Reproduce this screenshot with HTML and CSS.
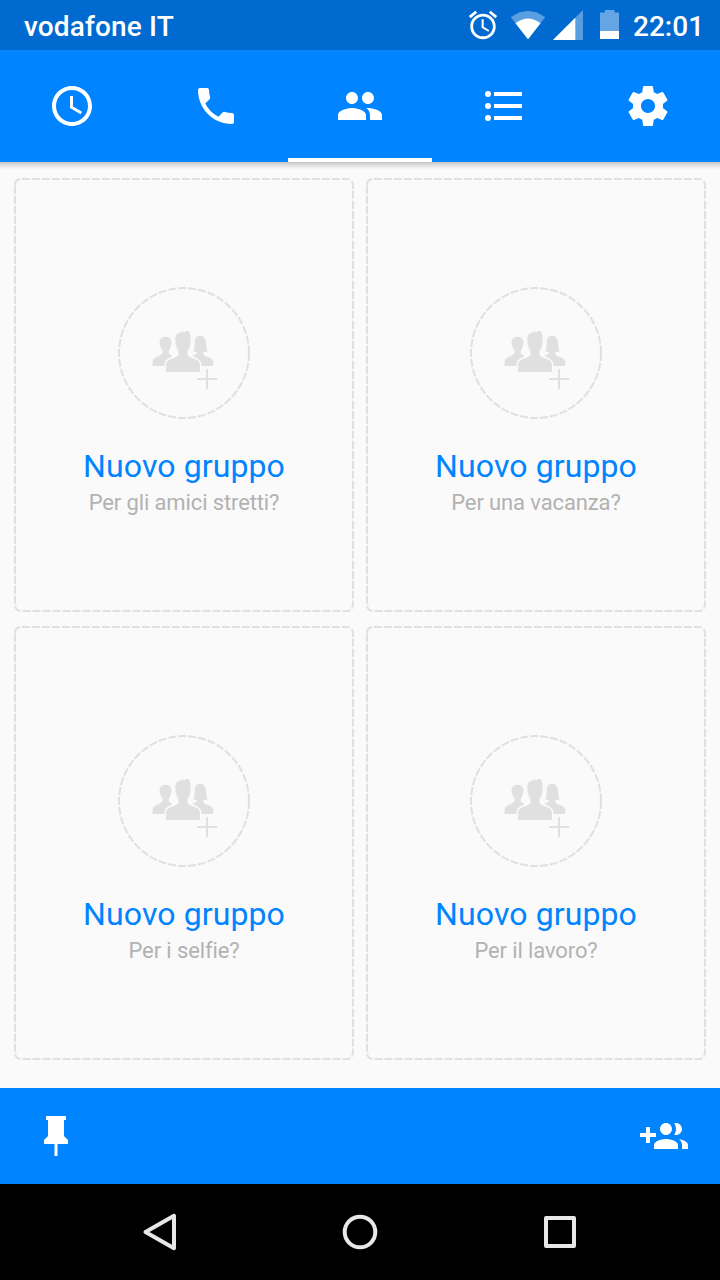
FILE: index.html
```
<!DOCTYPE html>
<html lang="it">
<head>
    <meta charset="UTF-8">
    <meta name="viewport" content="width=device-width, initial-scale=1.0">
    <title>Gruppi</title>
    <link rel="stylesheet" href="styles.css">
</head>
<body>
    <!-- shared shapes for the group cards -->
    <svg class="defs" width="0" height="0">
        <symbol id="card-frame" viewBox="0 0 340 434">
            <path d="M1 7a6 6 0 0 1 6-6H333a6 6 0 0 1 6 6V427a6 6 0 0 1-6 6H7a6 6 0 0 1-6-6Z" fill="none" stroke="#e0e0e0" stroke-width="2" stroke-dasharray="8 2"/>
        </symbol>
        <symbol id="group-add" viewBox="0 0 132 132">
            <circle cx="66" cy="66" r="65" fill="none" stroke="#e0e0e0" stroke-width="2" stroke-dasharray="8 2"/>
            <g transform="translate(-8 -7) scale(.33333)" fill="#e0e0e0">
                <path d="M128 258V245Q129 235 140 231Q154 226 158 219V212Q152 206 151 199Q147 193 149 188Q148 171 166 170Q183 170 184 184V189Q185 194 182 199Q181 207 176 213V218Q178 224 187 227L185 231Q167 235 164 250V258Z"/>
                <path d="M250 213Q255 206 254 187Q255 168 270 167Q286 168 288 187Q288 206 293 212Q288 216 279 217V222Q282 228 293 231Q309 235 310 246V258H274V250Q271 236 252 230L248 226Q259 224 262 218V216Q254 216 250 213Z"/>
                <path d="M168 276V254Q170 241 183 237Q203 232 206 223V214Q200 208 199 198Q195 192 197 186Q194 170 201 162Q209 155 224 155L237 152Q235 156 238 159Q242 163 242 173L241 186Q243 192 239 198Q238 208 232 214V223Q234 231 254 237Q269 241 270 254V276Z"/>
                <path d="M288 267H294V294H321V300H294V327H288V300H261V294H288Z"/>
            </g>
        </symbol>
    </svg>

    <div class="status-bar">
        <span class="carrier">vodafone IT</span>
        <div class="status-icons">
            <svg class="alarm" width="34" height="34" viewBox="0 0 24 24"><path d="M22 5.72l-4.6-3.86-1.29 1.53 4.6 3.86L22 5.72zM7.88 3.39L6.6 1.86 2 5.71l1.29 1.53 4.59-3.85zM12.5 8H11v6l4.75 2.85.75-1.23-4-2.37V8zM12 4c-4.97 0-9 4.03-9 9s4.02 9 9 9c4.97 0 9-4.03 9-9s-4.03-9-9-9zm0 16c-3.87 0-7-3.13-7-7s3.13-7 7-7 7 3.13 7 7-3.13 7-7 7z"/></svg>
            <svg class="wifi" width="36" height="50" viewBox="0 0 36 50"><path opacity=".35" d="M.8 17.3Q18 4.7 35.2 17.3L18 39.3z"/><path d="M5.5 23.3Q18 13.7 30.5 23.3L18 39.3z"/></svg>
            <svg class="signal" width="30" height="50" viewBox="0 0 30 50"><path opacity=".35" d="M0 40L30 10V40z"/><path d="M0 40L22.3 17.7V40z"/></svg>
            <svg class="battery" width="20" height="50" viewBox="0 0 20 50"><path opacity=".4" d="M5 10h9.500v2.500H19V31H0V12.500h5z"/><path d="M0 31h19v8H0z"/></svg>
            <span class="time">22:01</span>
        </div>
    </div>

    <div class="tabs">
        <div class="tab">
            <svg width="48" height="48" viewBox="0 0 24 24"><path d="M11.99 2C6.47 2 2 6.48 2 12s4.47 10 9.99 10C17.52 22 22 17.52 22 12S17.52 2 11.99 2zM12 20c-4.42 0-8-3.58-8-8s3.58-8 8-8 8 3.580 8 8-3.580 8-8 8zm.5-13H11v6l5.250 3.150.750-1.230-4.500-2.670z"/></svg>
        </div>
        <div class="tab">
            <svg width="48" height="48" viewBox="0 0 24 24"><path d="M6.62 10.79c1.440 2.830 3.760 5.140 6.590 6.590l2.200-2.200c.270-.270.670-.360 1.020-.240 1.120.370 2.330.570 3.570.570.550 0 1 .450 1 1V20c0 .550-.450 1-1 1-9.390 0-17-7.610-17-17 0-.550.450-1 1-1h3.500c.550 0 1 .450 1 1 0 1.250.200 2.450.570 3.570.110.350.030.740-.250 1.020l-2.200 2.200z"/></svg>
        </div>
        <div class="tab active">
            <svg width="48" height="48" viewBox="0 0 24 24"><path d="M16 11c1.660 0 2.990-1.340 2.990-3S17.660 5 16 5c-1.660 0-3 1.340-3 3s1.340 3 3 3zm-8 0c1.660 0 2.990-1.340 2.990-3S9.660 5 8 5C6.340 5 5 6.340 5 8s1.340 3 3 3zm0 2c-2.330 0-7 1.170-7 3.500V19h14v-2.500c0-2.330-4.670-3.500-7-3.500zm8 0c-.290 0-.620.020-.970.050 1.160.840 1.970 1.970 1.970 3.450V19h6v-2.500c0-2.330-4.670-3.500-7-3.500z"/></svg>
        </div>
        <div class="tab">
            <svg width="48" height="48" viewBox="0 0 24 24"><circle cx="4" cy="6" r="1.5"/><circle cx="4" cy="12" r="1.5"/><circle cx="4" cy="18" r="1.5"/><path d="M7 5h14v2H7zM7 11h14v2H7zM7 17h14v2H7z"/></svg>
        </div>
        <div class="tab">
            <svg width="48" height="48" viewBox="0 0 24 24"><path d="M19.430 12.980c.040-.320.070-.640.070-.980s-.030-.660-.070-.980l2.110-1.650c.190-.150.240-.420.120-.640l-2-3.460c-.120-.220-.390-.300-.610-.220l-2.490 1c-.520-.400-1.080-.730-1.690-.980l-.380-2.650C14.460 2.180 14.250 2 14 2h-4c-.250 0-.460.180-.490.420l-.380 2.650c-.610.250-1.170.590-1.690.980l-2.490-1c-.230-.090-.490 0-.610.220l-2 3.460c-.130.220-.070.490.120.640l2.110 1.650c-.040.320-.070.650-.070.980s.030.660.070.980l-2.110 1.650c-.190.150-.240.420-.120.640l2 3.460c.120.220.390.300.610.220l2.490-1c.520.400 1.080.730 1.690.980l.380 2.650c.030.240.240.420.490.420h4c.250 0 .460-.180.490-.420l.380-2.650c.610-.250 1.170-.590 1.690-.980l2.490 1c.230.090.490 0 .610-.220l2-3.460c.120-.220.070-.490-.120-.640l-2.110-1.650zM12 15.500c-1.930 0-3.500-1.570-3.500-3.500s1.570-3.500 3.500-3.500 3.500 1.570 3.500 3.500-1.570 3.500-3.500 3.500z"/></svg>
        </div>
    </div>

    <div class="groups">
        <div class="card">
            <svg class="frame"><use href="#card-frame"/></svg>
            <svg class="avatar"><use href="#group-add"/></svg>
            <div class="title">Nuovo gruppo</div>
            <div class="hint">Per gli amici stretti?</div>
        </div>
        <div class="card">
            <svg class="frame"><use href="#card-frame"/></svg>
            <svg class="avatar"><use href="#group-add"/></svg>
            <div class="title">Nuovo gruppo</div>
            <div class="hint">Per una vacanza?</div>
        </div>
        <div class="card">
            <svg class="frame"><use href="#card-frame"/></svg>
            <svg class="avatar"><use href="#group-add"/></svg>
            <div class="title">Nuovo gruppo</div>
            <div class="hint">Per i selfie?</div>
        </div>
        <div class="card">
            <svg class="frame"><use href="#card-frame"/></svg>
            <svg class="avatar"><use href="#group-add"/></svg>
            <div class="title">Nuovo gruppo</div>
            <div class="hint">Per il lavoro?</div>
        </div>
    </div>

    <div class="bottom-bar">
        <svg width="48" height="48" viewBox="0 0 48 48"><path d="M14 4h20v4h-2v16l4 4v4H25.500v12h-3V32H12v-4l4-4V8h-2z"/></svg>
        <svg class="add-people" width="48" height="48" viewBox="0 0 24 24"><path d="M8 10H5V7H3v3H0v2h3v3h2v-3h3v-2zm10 1c1.660 0 2.990-1.340 2.990-3S19.660 5 18 5c-.320 0-.630.050-.910.140.570.810.900 1.790.900 2.860s-.340 2.040-.900 2.860c.280.090.590.140.910.140zm-5 0c1.660 0 2.990-1.340 2.990-3S14.660 5 13 5c-1.660 0-3 1.340-3 3s1.340 3 3 3zm6.620 2.160c.830.730 1.380 1.660 1.380 2.840v2h3v-2c0-1.540-2.370-2.490-4.380-2.840zM13 13c-2 0-6 1-6 3v2h12v-2c0-2-4-3-6-3z"/></svg>
    </div>

    <div class="nav-bar">
        <svg width="40" height="40" viewBox="0 0 40 40"><path d="M5.500 20L34 3.800V36.200z"/></svg>
        <svg width="40" height="40" viewBox="0 0 40 40"><circle cx="20" cy="20" r="15.300"/></svg>
        <svg width="40" height="40" viewBox="0 0 40 40"><rect x="6" y="6" width="28" height="28"/></svg>
    </div>
</body>
</html>
```
FILE: styles.css
```
body, html {
    margin: 0;
    padding: 0;
    font-family: Roboto, sans-serif;
    background-color: #fafafa;
}
body {
    width: 720px;
    height: 1280px;
    display: flex;
    flex-direction: column;
    overflow: hidden;
}
svg {
    display: block;
    flex: none;
    fill: white;
}
.defs {
    position: absolute;
}
.status-bar {
    height: 50px;
    display: flex;
    justify-content: space-between;
    align-items: center;
    padding: 0 16px 0 24px;
    background-color: #006ad0;
    color: white;
    font-size: 28px;
    font-weight: 500;
    line-height: 50px;
}
.carrier, .time {
    height: 48px;
    padding-top: 2px;
    line-height: 50px;
}
.carrier {
    letter-spacing: 0.15px;
}
.status-icons {
    display: flex;
    align-items: center;
}
.wifi {
    margin-left: 10px;
}
.signal {
    margin-left: 7px;
}
.battery {
    margin-left: 17px;
}
.time {
    width: 71px;
    margin-left: 13px;
    white-space: nowrap;
}
.tabs {
    height: 112px;
    display: flex;
    background-color: #0084ff;
}
.tab {
    flex: 1;
    display: flex;
    align-items: center;
    justify-content: center;
}
.tab.active {
    box-shadow: inset 0 -4px white;
}
.groups {
    height: 926px;
    box-sizing: border-box;
    display: grid;
    grid-template-columns: 340px 340px;
    grid-template-rows: 434px 434px;
    gap: 14px 12px;
    padding: 16px 14px;
    background: linear-gradient(#c4c4c4, #dedede 3px, #f2f2f2 6px, #fafafa 8px);
}
.card {
    position: relative;
    display: flex;
    flex-direction: column;
    align-items: center;
}
.frame {
    position: absolute;
    top: 0;
    left: 0;
    width: 340px;
    height: 434px;
}
.avatar {
    width: 132px;
    height: 132px;
    margin-top: 109px;
}
.title {
    margin-top: 27px;
    font-size: 32px;
    line-height: 40px;
    letter-spacing: 0.1px;
    color: #0084ff;
}
.hint {
    margin-top: 2px;
    font-size: 22px;
    line-height: 30px;
    letter-spacing: -0.12px;
    color: #b2b2b2;
}
.bottom-bar {
    height: 96px;
    box-sizing: border-box;
    display: flex;
    justify-content: space-between;
    align-items: center;
    padding: 0 32px;
    background-color: #0084ff;
}
.add-people {
    margin-top: 2px;
}
.nav-bar {
    height: 96px;
    display: flex;
    justify-content: center;
    align-items: center;
    gap: 160px;
    background-color: black;
}
.nav-bar svg {
    fill: none;
    stroke: #e8e8e8;
    stroke-width: 4;
    stroke-linejoin: round;
}
```
